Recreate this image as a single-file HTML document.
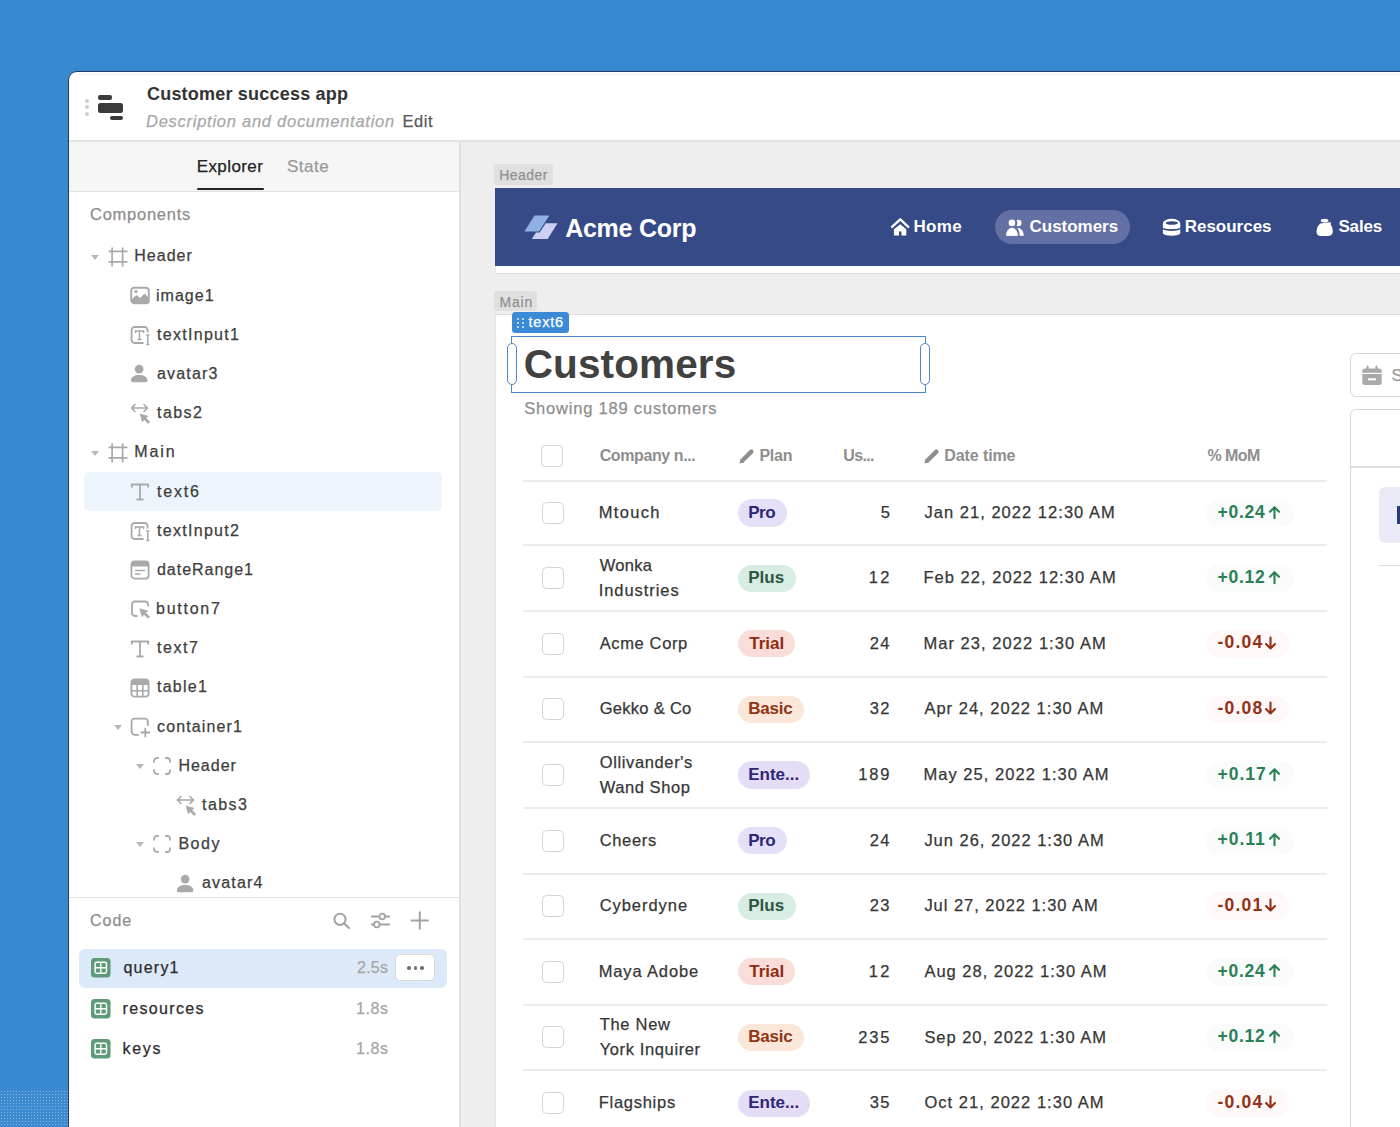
<!DOCTYPE html>
<html><head><meta charset="utf-8">
<style>
*{box-sizing:border-box;margin:0;padding:0}
html,body{width:1400px;height:1127px;overflow:hidden}
body{background:#3989d0;font-family:"Liberation Sans",sans-serif;position:relative}
.t{position:absolute;white-space:nowrap;line-height:1}
svg{overflow:visible}
</style></head><body>
<div style="position:absolute;left:0;top:1090px;width:68px;height:37px;background-color:#3b8bd3;background-image:radial-gradient(circle,#8fb2d2 0.7px,transparent 0.85px);background-size:3px 3px"></div>
<div style="position:absolute;left:68px;top:71px;width:1400px;height:1100px;background:#fff;border:1.5px solid #1d3d68;border-top-left-radius:9px;"></div>
<div style="position:absolute;left:76px;top:73.5px;width:1324px;height:1.2px;background:#f0f0f0"></div>
<div style="position:absolute;left:69px;top:140px;width:1331px;height:1.5px;background:#e3e3e3"></div>
<div style="position:absolute;left:84.8px;top:98.6px;width:4px;height:4px;background:#cfcfcf;border-radius:50%"></div>
<div style="position:absolute;left:84.8px;top:105.2px;width:4px;height:4px;background:#cfcfcf;border-radius:50%"></div>
<div style="position:absolute;left:84.8px;top:111.6px;width:4px;height:4px;background:#cfcfcf;border-radius:50%"></div>
<div style="position:absolute;left:98px;top:95px;width:13.5px;height:5px;background:#3a3b3b;border-radius:2px"></div>
<div style="position:absolute;left:98px;top:103.2px;width:25px;height:9.5px;background:#3a3b3b;border-radius:2.5px"></div>
<div style="position:absolute;left:109.7px;top:115.9px;width:13.2px;height:4px;background:#3a3b3b;border-radius:2px"></div>
<div class="t" style="left:147.00px;top:85.26px;font-size:18px;font-weight:700;font-style:normal;color:#333;letter-spacing:0.206px;">Customer success app</div>
<div class="t" style="left:146.00px;top:112.53px;font-size:16.5px;font-weight:400;font-style:italic;color:#a8a8a8;letter-spacing:0.739px;-webkit-text-stroke:0.25px currentColor">Description and documentation</div>
<div class="t" style="left:402.50px;top:112.53px;font-size:16.5px;font-weight:400;font-style:normal;color:#595959;letter-spacing:0.551px;-webkit-text-stroke:0.25px currentColor">Edit</div>
<div style="position:absolute;left:69px;top:142px;width:390px;height:49px;background:#f5f5f5"></div>
<div style="position:absolute;left:69px;top:190.5px;width:390px;height:1.5px;background:#e2e2e2"></div>
<div style="position:absolute;left:459px;top:142px;width:1.5px;height:1000px;background:#e0e0e0"></div>
<div class="t" style="left:196.70px;top:157.51px;font-size:17px;font-weight:400;font-style:normal;color:#222;letter-spacing:0.408px;-webkit-text-stroke:0.25px currentColor">Explorer</div>
<div class="t" style="left:286.90px;top:157.51px;font-size:17px;font-weight:400;font-style:normal;color:#9a9a9a;letter-spacing:0.540px;-webkit-text-stroke:0.25px currentColor">State</div>
<div style="position:absolute;left:197.4px;top:187.9px;width:66.3px;height:2.6px;background:#222;border-radius:1.5px"></div>
<div class="t" style="left:90.00px;top:206.03px;font-size:16.5px;font-weight:400;font-style:normal;color:#8d8d8d;letter-spacing:0.744px;-webkit-text-stroke:0.25px currentColor">Components</div>
<div style="position:absolute;left:84px;top:472px;width:358px;height:39px;background:#edf4fc;border-radius:5px"></div>
<svg style="position:absolute;left:91px;top:254.60000000000002px;" width="8" height="5" viewBox="0 0 8 5"><path d="M0 0H8L4 5Z" fill="#b8b8b8"/></svg>
<svg style="position:absolute;left:108px;top:246.60000000000002px;" width="20" height="20" viewBox="0 0 20 20"><g stroke="#a9a9a9" stroke-width="1.7" fill="none"><path d="M4.1 0.5V19.5M14.6 0.5V19.5M0.5 4.3H19.5M0.5 14.8H19.5"/></g></svg>
<div class="t" style="left:134.30px;top:248.36px;font-size:16px;font-weight:400;font-style:normal;color:#3d3d3d;letter-spacing:1.010px;-webkit-text-stroke:0.25px currentColor">Header</div>
<svg style="position:absolute;left:130px;top:285.79px;" width="20" height="20" viewBox="0 0 20 20"><rect x="1.2" y="1.7" width="17.6" height="15.6" rx="3" fill="none" stroke="#a9a9a9" stroke-width="1.9"/><path d="M1.5 13.5 L6.5 9 L10 12 L14.5 7.5 L18.5 11.5 V14.5 A3 3 0 0 1 15.5 17.3 H4.5 A3 3 0 0 1 1.5 14.5Z" fill="#a9a9a9"/><circle cx="6" cy="5.6" r="1.7" fill="#a9a9a9"/></svg>
<div class="t" style="left:156.00px;top:287.55px;font-size:16px;font-weight:400;font-style:normal;color:#3d3d3d;letter-spacing:1.024px;-webkit-text-stroke:0.25px currentColor">image1</div>
<svg style="position:absolute;left:130px;top:324.98px;" width="20" height="20" viewBox="0 0 20 20"><g fill="none" stroke="#a9a9a9" stroke-width="1.8"><path d="M17.6 7.5V5A3 3 0 0 0 14.6 2H4.6A3 3 0 0 0 1.6 5V15A3 3 0 0 0 4.6 18H13.5"/><path d="M5.5 8V6H13.5V8M9.5 6V14.5M7.5 14.5H11.5" stroke-width="1.5"/><path d="M17.8 10V19.5M16.2 10H19.4M16.2 19.5H19.4" stroke-width="1.5"/></g></svg>
<div class="t" style="left:157.00px;top:326.74px;font-size:16px;font-weight:400;font-style:normal;color:#3d3d3d;letter-spacing:1.292px;-webkit-text-stroke:0.25px currentColor">textInput1</div>
<svg style="position:absolute;left:130px;top:364.17px;" width="20" height="20" viewBox="0 0 20 20"><circle cx="9.15" cy="5.1" r="4.4" fill="#a9a9a9"/><path d="M0.9 16.4C0.9 13 4.5 11 9.15 11C13.8 11 17.4 13 17.4 16.4V16.6A1.6 1.6 0 0 1 15.8 18.2H2.5A1.6 1.6 0 0 1 0.9 16.6Z" fill="#a9a9a9"/></svg>
<div class="t" style="left:157.00px;top:365.93px;font-size:16px;font-weight:400;font-style:normal;color:#3d3d3d;letter-spacing:1.172px;-webkit-text-stroke:0.25px currentColor">avatar3</div>
<svg style="position:absolute;left:130px;top:403.36px;" width="20" height="20" viewBox="0 0 20 20"><g fill="none" stroke="#a9a9a9" stroke-width="1.6" stroke-linecap="round" stroke-linejoin="round"><path d="M1.5 5H17.5M5 1.5L1.5 5L5 8.5M14 1.5L17.5 5L14 8.5"/></g><path d="M10.3 11.2L18 13.2L15.6 14.9L19.6 18.9L18.1 20.4L14.1 16.4L12.4 18.8Z" fill="#a9a9a9" stroke="#a9a9a9" stroke-width="0.8" stroke-linejoin="round"/></svg>
<div class="t" style="left:157.00px;top:405.12px;font-size:16px;font-weight:400;font-style:normal;color:#3d3d3d;letter-spacing:1.439px;-webkit-text-stroke:0.25px currentColor">tabs2</div>
<svg style="position:absolute;left:91px;top:450.55px;" width="8" height="5" viewBox="0 0 8 5"><path d="M0 0H8L4 5Z" fill="#b8b8b8"/></svg>
<svg style="position:absolute;left:108px;top:442.55px;" width="20" height="20" viewBox="0 0 20 20"><g stroke="#a9a9a9" stroke-width="1.7" fill="none"><path d="M4.1 0.5V19.5M14.6 0.5V19.5M0.5 4.3H19.5M0.5 14.8H19.5"/></g></svg>
<div class="t" style="left:134.30px;top:444.31px;font-size:16px;font-weight:400;font-style:normal;color:#3d3d3d;letter-spacing:1.906px;-webkit-text-stroke:0.25px currentColor">Main</div>
<svg style="position:absolute;left:130px;top:481.74px;" width="20" height="20" viewBox="0 0 20 20"><g fill="none" stroke="#a9a9a9" stroke-width="1.8"><path d="M1.8 5.5V2.5H18.2V5.5M10 2.5V17.5M6.5 17.5H13.5"/></g></svg>
<div class="t" style="left:157.00px;top:483.50px;font-size:16px;font-weight:400;font-style:normal;color:#3d3d3d;letter-spacing:1.803px;-webkit-text-stroke:0.25px currentColor">text6</div>
<svg style="position:absolute;left:130px;top:520.93px;" width="20" height="20" viewBox="0 0 20 20"><g fill="none" stroke="#a9a9a9" stroke-width="1.8"><path d="M17.6 7.5V5A3 3 0 0 0 14.6 2H4.6A3 3 0 0 0 1.6 5V15A3 3 0 0 0 4.6 18H13.5"/><path d="M5.5 8V6H13.5V8M9.5 6V14.5M7.5 14.5H11.5" stroke-width="1.5"/><path d="M17.8 10V19.5M16.2 10H19.4M16.2 19.5H19.4" stroke-width="1.5"/></g></svg>
<div class="t" style="left:157.00px;top:522.69px;font-size:16px;font-weight:400;font-style:normal;color:#3d3d3d;letter-spacing:1.292px;-webkit-text-stroke:0.25px currentColor">textInput2</div>
<svg style="position:absolute;left:130px;top:560.12px;" width="20" height="20" viewBox="0 0 20 20"><rect x="1.4" y="1.4" width="17.2" height="17.2" rx="3" fill="none" stroke="#a9a9a9" stroke-width="1.8"/><path d="M1.4 4.4A3 3 0 0 1 4.4 1.4H15.6A3 3 0 0 1 18.6 4.4V6.5H1.4Z" fill="#a9a9a9"/><path d="M5 10.5H15M5 14H10.5" stroke="#a9a9a9" stroke-width="1.6"/></svg>
<div class="t" style="left:157.00px;top:561.88px;font-size:16px;font-weight:400;font-style:normal;color:#3d3d3d;letter-spacing:0.968px;-webkit-text-stroke:0.25px currentColor">dateRange1</div>
<svg style="position:absolute;left:130px;top:599.31px;" width="20" height="20" viewBox="0 0 20 20"><g fill="none" stroke="#a9a9a9" stroke-width="1.8"><path d="M7.5 17H5A3 3 0 0 1 2 14V5.5A3 3 0 0 1 5 2.5H15A3 3 0 0 1 18 5.5V7.5"/></g><path d="M9.8 9.8L17.8 12L15.4 13.7L19.5 17.8L18 19.3L13.9 15.2L12.2 17.6Z" fill="#a9a9a9" stroke="#a9a9a9" stroke-width="0.8" stroke-linejoin="round"/></svg>
<div class="t" style="left:156.00px;top:601.07px;font-size:16px;font-weight:400;font-style:normal;color:#3d3d3d;letter-spacing:1.753px;-webkit-text-stroke:0.25px currentColor">button7</div>
<svg style="position:absolute;left:130px;top:638.5px;" width="20" height="20" viewBox="0 0 20 20"><g fill="none" stroke="#a9a9a9" stroke-width="1.8"><path d="M1.8 5.5V2.5H18.2V5.5M10 2.5V17.5M6.5 17.5H13.5"/></g></svg>
<div class="t" style="left:157.00px;top:640.26px;font-size:16px;font-weight:400;font-style:normal;color:#3d3d3d;letter-spacing:1.553px;-webkit-text-stroke:0.25px currentColor">text7</div>
<svg style="position:absolute;left:130px;top:677.69px;" width="20" height="20" viewBox="0 0 20 20"><rect x="1.4" y="1.4" width="17.2" height="17.2" rx="3.2" fill="none" stroke="#a9a9a9" stroke-width="1.8"/><path d="M1.4 4.6A3.2 3.2 0 0 1 4.6 1.4H15.4A3.2 3.2 0 0 1 18.6 4.6V7H1.4Z" fill="#a9a9a9"/><path d="M7.2 6.5V18.5M12.8 6.5V18.5M1.5 12.7H18.5" stroke="#a9a9a9" stroke-width="1.6"/></svg>
<div class="t" style="left:157.00px;top:679.45px;font-size:16px;font-weight:400;font-style:normal;color:#3d3d3d;letter-spacing:1.261px;-webkit-text-stroke:0.25px currentColor">table1</div>
<svg style="position:absolute;left:113.5px;top:724.88px;" width="8" height="5" viewBox="0 0 8 5"><path d="M0 0H8L4 5Z" fill="#b8b8b8"/></svg>
<svg style="position:absolute;left:130px;top:716.88px;" width="20" height="20" viewBox="0 0 20 20"><g fill="none" stroke="#a9a9a9" stroke-width="1.8"><path d="M9 17.8H4.6A3 3 0 0 1 1.6 14.8V4.6A3 3 0 0 1 4.6 1.6H14.8A3 3 0 0 1 17.8 4.6V9"/><path d="M15.3 10.8V20.3M10.6 15.5H20.1" stroke-width="1.8"/></g></svg>
<div class="t" style="left:157.00px;top:718.64px;font-size:16px;font-weight:400;font-style:normal;color:#3d3d3d;letter-spacing:1.131px;-webkit-text-stroke:0.25px currentColor">container1</div>
<svg style="position:absolute;left:136px;top:764.07px;" width="8" height="5" viewBox="0 0 8 5"><path d="M0 0H8L4 5Z" fill="#b8b8b8"/></svg>
<svg style="position:absolute;left:151.8px;top:756.07px;" width="20" height="20" viewBox="0 0 20 20"><g fill="none" stroke="#a9a9a9" stroke-width="1.8"><path d="M2 6.5V5A3 3 0 0 1 5 2H6.8M13.2 2H15A3 3 0 0 1 18 5V6.5M18 13.5V15A3 3 0 0 1 15 18H13.2M6.8 18H5A3 3 0 0 1 2 15V13.5"/></g></svg>
<div class="t" style="left:178.40px;top:757.83px;font-size:16px;font-weight:400;font-style:normal;color:#3d3d3d;letter-spacing:1.010px;-webkit-text-stroke:0.25px currentColor">Header</div>
<svg style="position:absolute;left:175.5px;top:795.26px;" width="20" height="20" viewBox="0 0 20 20"><g fill="none" stroke="#a9a9a9" stroke-width="1.6" stroke-linecap="round" stroke-linejoin="round"><path d="M1.5 5H17.5M5 1.5L1.5 5L5 8.5M14 1.5L17.5 5L14 8.5"/></g><path d="M10.3 11.2L18 13.2L15.6 14.9L19.6 18.9L18.1 20.4L14.1 16.4L12.4 18.8Z" fill="#a9a9a9" stroke="#a9a9a9" stroke-width="0.8" stroke-linejoin="round"/></svg>
<div class="t" style="left:202.00px;top:797.02px;font-size:16px;font-weight:400;font-style:normal;color:#3d3d3d;letter-spacing:1.439px;-webkit-text-stroke:0.25px currentColor">tabs3</div>
<svg style="position:absolute;left:136px;top:842.45px;" width="8" height="5" viewBox="0 0 8 5"><path d="M0 0H8L4 5Z" fill="#b8b8b8"/></svg>
<svg style="position:absolute;left:151.8px;top:834.45px;" width="20" height="20" viewBox="0 0 20 20"><g fill="none" stroke="#a9a9a9" stroke-width="1.8"><path d="M2 6.5V5A3 3 0 0 1 5 2H6.8M13.2 2H15A3 3 0 0 1 18 5V6.5M18 13.5V15A3 3 0 0 1 15 18H13.2M6.8 18H5A3 3 0 0 1 2 15V13.5"/></g></svg>
<div class="t" style="left:178.40px;top:836.21px;font-size:16px;font-weight:400;font-style:normal;color:#3d3d3d;letter-spacing:1.510px;-webkit-text-stroke:0.25px currentColor">Body</div>
<svg style="position:absolute;left:175.5px;top:873.64px;" width="20" height="20" viewBox="0 0 20 20"><circle cx="9.15" cy="5.1" r="4.4" fill="#a9a9a9"/><path d="M0.9 16.4C0.9 13 4.5 11 9.15 11C13.8 11 17.4 13 17.4 16.4V16.6A1.6 1.6 0 0 1 15.8 18.2H2.5A1.6 1.6 0 0 1 0.9 16.6Z" fill="#a9a9a9"/></svg>
<div class="t" style="left:202.00px;top:875.40px;font-size:16px;font-weight:400;font-style:normal;color:#3d3d3d;letter-spacing:1.172px;-webkit-text-stroke:0.25px currentColor">avatar4</div>
<div style="position:absolute;left:69px;top:896.5px;width:390px;height:1.3px;background:#e2e2e2"></div>
<div class="t" style="left:90.00px;top:912.66px;font-size:16px;font-weight:400;font-style:normal;color:#8d8d8d;letter-spacing:0.983px;-webkit-text-stroke:0.25px currentColor">Code</div>
<svg style="position:absolute;left:332px;top:912px;" width="20" height="18" viewBox="0 0 20 18"><circle cx="8" cy="7.3" r="5.6" fill="none" stroke="#a3a3a3" stroke-width="2"/><path d="M12.2 11.5L17 16" stroke="#a3a3a3" stroke-width="2.2" stroke-linecap="round"/></svg>
<svg style="position:absolute;left:370px;top:911px;" width="21" height="19" viewBox="0 0 21 19"><g fill="none" stroke="#a3a3a3" stroke-width="1.8"><path d="M1 5.5H9.5M15 5.5H20M1 13.5H4M9.5 13.5H20"/><circle cx="12.2" cy="5.5" r="2.8"/><circle cx="6.8" cy="13.5" r="2.8"/></g></svg>
<svg style="position:absolute;left:410px;top:911px;" width="20" height="19" viewBox="0 0 20 19"><path d="M9.8 1.3V17.7M1.5 9.4H17.9" stroke="#a3a3a3" stroke-width="2" stroke-linecap="round"/></svg>
<div style="position:absolute;left:78.9px;top:948.5px;width:368.5px;height:39px;background:#dce9f9;border-radius:6px"></div>
<svg style="position:absolute;left:90.9px;top:958.2px;" width="19.5" height="19.5" viewBox="0 0 19.5 19.5"><rect x="0" y="0" width="19.5" height="19.5" rx="3.5" fill="#5d9b77"/><rect x="4.1" y="4.3" width="11.4" height="10.9" rx="1.6" fill="none" stroke="#fff" stroke-width="1.5"/><path d="M9.8 4.3V15.2M4.1 9.75H15.5" stroke="#fff" stroke-width="1.4"/></svg>
<div class="t" style="left:123.50px;top:959.96px;font-size:16px;font-weight:400;font-style:normal;color:#2c2c2c;letter-spacing:1.215px;-webkit-text-stroke:0.25px currentColor">query1</div>
<div class="t" style="left:357.00px;top:959.96px;font-size:16px;font-weight:400;font-style:normal;color:#a5a5a5;letter-spacing:0.253px;-webkit-text-stroke:0.25px currentColor">2.5s</div>
<svg style="position:absolute;left:90.9px;top:998.8000000000001px;" width="19.5" height="19.5" viewBox="0 0 19.5 19.5"><rect x="0" y="0" width="19.5" height="19.5" rx="3.5" fill="#5d9b77"/><rect x="4.1" y="4.3" width="11.4" height="10.9" rx="1.6" fill="none" stroke="#fff" stroke-width="1.5"/><path d="M9.8 4.3V15.2M4.1 9.75H15.5" stroke="#fff" stroke-width="1.4"/></svg>
<div class="t" style="left:122.50px;top:1000.56px;font-size:16px;font-weight:400;font-style:normal;color:#2c2c2c;letter-spacing:1.344px;-webkit-text-stroke:0.25px currentColor">resources</div>
<div class="t" style="left:356.00px;top:1000.56px;font-size:16px;font-weight:400;font-style:normal;color:#a5a5a5;letter-spacing:0.586px;-webkit-text-stroke:0.25px currentColor">1.8s</div>
<svg style="position:absolute;left:90.9px;top:1039.2px;" width="19.5" height="19.5" viewBox="0 0 19.5 19.5"><rect x="0" y="0" width="19.5" height="19.5" rx="3.5" fill="#5d9b77"/><rect x="4.1" y="4.3" width="11.4" height="10.9" rx="1.6" fill="none" stroke="#fff" stroke-width="1.5"/><path d="M9.8 4.3V15.2M4.1 9.75H15.5" stroke="#fff" stroke-width="1.4"/></svg>
<div class="t" style="left:122.50px;top:1040.96px;font-size:16px;font-weight:400;font-style:normal;color:#2c2c2c;letter-spacing:1.701px;-webkit-text-stroke:0.25px currentColor">keys</div>
<div class="t" style="left:356.00px;top:1040.96px;font-size:16px;font-weight:400;font-style:normal;color:#a5a5a5;letter-spacing:0.586px;-webkit-text-stroke:0.25px currentColor">1.8s</div>
<div style="position:absolute;left:395.3px;top:954.3px;width:40.2px;height:27.1px;background:#fff;border:1.2px solid #dadada;border-radius:5px"></div>
<div style="position:absolute;left:407.0px;top:966.1px;width:3.6px;height:3.6px;background:#707070;border-radius:50%"></div>
<div style="position:absolute;left:413.59999999999997px;top:966.1px;width:3.6px;height:3.6px;background:#707070;border-radius:50%"></div>
<div style="position:absolute;left:420.3px;top:966.1px;width:3.6px;height:3.6px;background:#707070;border-radius:50%"></div>
<div style="position:absolute;left:460.5px;top:141.5px;width:940px;height:990px;background:#eeeeee"></div>
<div style="position:absolute;left:494.2px;top:164px;width:59px;height:20.5px;background:#e0e0e0;border-radius:3px"></div>
<div class="t" style="left:499.30px;top:167.65px;font-size:14px;font-weight:400;font-style:normal;color:#919191;letter-spacing:0.429px;-webkit-text-stroke:0.25px currentColor">Header</div>
<div style="position:absolute;left:495px;top:188px;width:905px;height:86px;background:#fff;border-bottom:1.5px solid #dedede;border-left:1px solid #e6e6e6"></div>
<div style="position:absolute;left:495px;top:187.8px;width:905px;height:78px;background:#364a87"></div>
<svg style="position:absolute;left:522px;top:213px;" width="38" height="28" viewBox="0 0 38 28"><path d="M12.5 2.6H27.4L16.9 18.6H2.4Z" fill="#8fb0e2"/><path d="M9.8 26L14 19.6H17.6L23.7 10.2H35.5L25.7 26Z" fill="#cdd0f2"/></svg>
<div class="t" style="left:565.20px;top:215.54px;font-size:25px;font-weight:700;font-style:normal;color:#ffffff;letter-spacing:-0.261px;">Acme Corp</div>
<div style="position:absolute;left:995.1px;top:210.2px;width:134.7px;height:33.4px;background:#6470a4;border-radius:17px"></div>
<div class="t" style="left:913.40px;top:218.11px;font-size:17px;font-weight:700;font-style:normal;color:#fff;letter-spacing:0.341px;">Home</div>
<div class="t" style="left:1029.50px;top:218.11px;font-size:17px;font-weight:700;font-style:normal;color:#fff;letter-spacing:-0.018px;">Customers</div>
<div class="t" style="left:1184.70px;top:218.11px;font-size:17px;font-weight:700;font-style:normal;color:#fff;letter-spacing:-0.010px;">Resources</div>
<div class="t" style="left:1338.40px;top:218.11px;font-size:17px;font-weight:700;font-style:normal;color:#fff;letter-spacing:-0.143px;">Sales</div>
<svg style="position:absolute;left:891px;top:218px;" width="19" height="19" viewBox="0 0 19 19"><path d="M1 8.9L9.3 1.3L17.3 8.9" fill="none" stroke="#ffffff" stroke-width="2.3" stroke-linecap="round" stroke-linejoin="round"/><path d="M2.9 11.2L9.3 6.2L15.3 11.2V17.6H10.5V13.4H8V17.6H2.9Z" fill="#ffffff"/></svg>
<svg style="position:absolute;left:1006px;top:219px;" width="18" height="18" viewBox="0 0 18 18"><circle cx="12.3" cy="3.9" r="3.2" fill="#ffffff"/><circle cx="6.3" cy="3.9" r="5.1" fill="#6470a4"/><circle cx="5.9" cy="3.9" r="3.3" fill="#ffffff"/><path d="M12.6 8.9C15.6 9.6 17.8 12.5 17.8 16.8H13.6C13.6 13.3 12.9 10.8 11.2 9.3Z" fill="#ffffff"/><path d="M0 16.8A5.95 8 0 0 1 11.9 16.8Z" fill="#ffffff" stroke="#6470a4" stroke-width="1.2" paint-order="stroke"/><path d="M0.6 16.8A5.35 7.4 0 0 1 11.3 16.8Z" fill="#ffffff"/></svg>
<svg style="position:absolute;left:1162px;top:218px;" width="20" height="19" viewBox="0 0 20 19"><path d="M0.9 5.6A8.7 4.9 0 0 1 18.3 5.6V9.6A8.7 1.6 0 0 1 0.9 9.6Z" fill="#ffffff"/><ellipse cx="9.8" cy="5" rx="6.15" ry="1.75" fill="#364a87"/><path d="M0.9 11A8.7 1.9 0 0 0 18.3 11V15A8.7 2.7 0 0 1 0.9 15Z" fill="#ffffff"/></svg>
<svg style="position:absolute;left:1315.5px;top:217.5px;" width="18" height="19" viewBox="0 0 18 19"><ellipse cx="8.6" cy="2.6" rx="3.9" ry="1.9" fill="#ffffff"/><path d="M4.3 5.6C6 4.9 10.5 4.9 15.1 4.3L14.6 6.6C16.1 8.6 16.8 11 16.8 13.6C16.8 16.6 14.6 18.1 11.6 18.1H5.2C2.1 18.1 0.5 16.6 0.5 13.6C0.5 10.2 2.3 7.1 4.3 5.6Z" fill="#ffffff"/></svg>
<div style="position:absolute;left:494.2px;top:291.4px;width:43px;height:20px;background:#e0e0e0;border-radius:3px"></div>
<div class="t" style="left:499.50px;top:294.95px;font-size:14px;font-weight:400;font-style:normal;color:#919191;letter-spacing:0.814px;-webkit-text-stroke:0.25px currentColor">Main</div>
<div style="position:absolute;left:495px;top:314px;width:905px;height:830px;background:#fff;border-top:1.5px solid #dcdcdc;border-left:1px solid #e6e6e6"></div>
<div style="position:absolute;left:511.8px;top:311.6px;width:57.3px;height:21.8px;background:#3b8ad8;border-radius:3.5px"></div>
<div style="position:absolute;left:517.2px;top:317.6px;width:2.3px;height:2.3px;background:#e8f1fb;border-radius:50%"></div>
<div style="position:absolute;left:522.2px;top:317.6px;width:2.3px;height:2.3px;background:#e8f1fb;border-radius:50%"></div>
<div style="position:absolute;left:517.2px;top:321.6px;width:2.3px;height:2.3px;background:#e8f1fb;border-radius:50%"></div>
<div style="position:absolute;left:522.2px;top:321.6px;width:2.3px;height:2.3px;background:#e8f1fb;border-radius:50%"></div>
<div style="position:absolute;left:517.2px;top:325.6px;width:2.3px;height:2.3px;background:#e8f1fb;border-radius:50%"></div>
<div style="position:absolute;left:522.2px;top:325.6px;width:2.3px;height:2.3px;background:#e8f1fb;border-radius:50%"></div>
<div class="t" style="left:528.50px;top:315.03px;font-size:14.5px;font-weight:400;font-style:normal;color:#fff;letter-spacing:0.782px;-webkit-text-stroke:0.25px currentColor">text6</div>
<div style="position:absolute;left:511.2px;top:335.5px;width:415.2px;height:57.3px;border:1.8px solid #4b88cb"></div>
<div style="position:absolute;left:507px;top:343.2px;width:9.8px;height:41.6px;background:#fff;border:1.8px solid #4b88cb;border-radius:5px"></div>
<div style="position:absolute;left:920.2px;top:343.2px;width:9.8px;height:41.6px;background:#fff;border:1.8px solid #4b88cb;border-radius:5px"></div>
<div class="t" style="left:523.70px;top:343.92px;font-size:40.5px;font-weight:700;font-style:normal;color:#414141;letter-spacing:0.121px;">Customers</div>
<div class="t" style="left:524.20px;top:400.33px;font-size:16.5px;font-weight:400;font-style:normal;color:#8e8e8e;letter-spacing:0.808px;-webkit-text-stroke:0.25px currentColor">Showing 189 customers</div>
<div style="position:absolute;left:541.2px;top:445px;width:22px;height:21.6px;border:1.3px solid #d4d4d4;border-radius:4px;background:#fff"></div>
<div class="t" style="left:599.70px;top:448.16px;font-size:16px;font-weight:700;font-style:normal;color:#8e8e8e;letter-spacing:-0.401px;">Company n...</div>
<svg style="position:absolute;left:739px;top:448.8px;" width="15.5" height="15" viewBox="0 0 15.5 15"><path d="M4.2 10.8L12.4 2.6" stroke="#8e8e8e" stroke-width="4.4" stroke-linecap="round"/><path d="M0.5 14.5L1.6 9.6L5.4 13.4Z" fill="#8e8e8e"/></svg>
<div class="t" style="left:759.40px;top:448.16px;font-size:16px;font-weight:700;font-style:normal;color:#8e8e8e;letter-spacing:-0.239px;">Plan</div>
<div class="t" style="left:843.30px;top:448.16px;font-size:16px;font-weight:700;font-style:normal;color:#8e8e8e;letter-spacing:-0.686px;">Us...</div>
<svg style="position:absolute;left:923.6px;top:448.8px;" width="15.5" height="15" viewBox="0 0 15.5 15"><path d="M4.2 10.8L12.4 2.6" stroke="#8e8e8e" stroke-width="4.4" stroke-linecap="round"/><path d="M0.5 14.5L1.6 9.6L5.4 13.4Z" fill="#8e8e8e"/></svg>
<div class="t" style="left:944.30px;top:448.16px;font-size:16px;font-weight:700;font-style:normal;color:#8e8e8e;letter-spacing:-0.103px;">Date time</div>
<div class="t" style="left:1207.50px;top:448.16px;font-size:16px;font-weight:700;font-style:normal;color:#8e8e8e;letter-spacing:-0.543px;">% MoM</div>
<div style="position:absolute;left:523px;top:480px;width:804px;height:2px;background:#ececec"></div>
<div style="position:absolute;left:523px;top:544px;width:804px;height:2px;background:#ececec"></div>
<div style="position:absolute;left:523px;top:610px;width:804px;height:2px;background:#ececec"></div>
<div style="position:absolute;left:523px;top:676px;width:804px;height:2px;background:#ececec"></div>
<div style="position:absolute;left:523px;top:741px;width:804px;height:2px;background:#ececec"></div>
<div style="position:absolute;left:523px;top:807px;width:804px;height:2px;background:#ececec"></div>
<div style="position:absolute;left:523px;top:873px;width:804px;height:2px;background:#ececec"></div>
<div style="position:absolute;left:523px;top:938px;width:804px;height:2px;background:#ececec"></div>
<div style="position:absolute;left:523px;top:1004px;width:804px;height:2px;background:#ececec"></div>
<div style="position:absolute;left:523px;top:1069px;width:804px;height:2px;background:#ececec"></div>
<div style="position:absolute;left:523px;top:1135px;width:804px;height:2px;background:#ececec"></div>
<div style="position:absolute;left:541.5px;top:501.90000000000003px;width:22px;height:22px;border:1.3px solid #d4d4d4;border-radius:4.5px;background:#fff"></div>
<div class="t" style="left:598.70px;top:504.03px;font-size:16.5px;font-weight:400;font-style:normal;color:#363636;letter-spacing:1.334px;-webkit-text-stroke:0.25px currentColor">Mtouch</div>
<div style="position:absolute;left:737.7px;top:499.40000000000003px;width:49.6px;height:27.2px;background:#e5dff7;border-radius:14px"></div>
<div class="t" style="left:748.20px;top:503.91px;font-size:17px;font-weight:700;font-style:normal;color:#2c2676;letter-spacing:-0.427px;">Pro</div>
<div class="t" style="left:880.70px;top:504.03px;font-size:16.5px;font-weight:400;font-style:normal;color:#363636;letter-spacing:0.000px;-webkit-text-stroke:0.25px currentColor">5</div>
<div class="t" style="left:924.40px;top:504.03px;font-size:16.5px;font-weight:400;font-style:normal;color:#363636;letter-spacing:1.036px;-webkit-text-stroke:0.25px currentColor">Jan 21, 2022 12:30 AM</div>
<div style="position:absolute;left:1206px;top:499.20000000000005px;width:87.8px;height:27.8px;background:#f9fcfb;border-radius:14px"></div>
<div class="t" style="left:1217.60px;top:503.69px;font-size:17.5px;font-weight:700;font-style:normal;color:#2c8056;letter-spacing:0.688px;">+0.24</div>
<svg style="position:absolute;left:1268.8px;top:505.6px;" width="11" height="12.7" viewBox="0 0 11 12.7"><path d="M5.5 12.2V1.2M1 5.7L5.5 1.2L10 5.7" fill="none" stroke="#2c8056" stroke-width="2.1" stroke-linecap="round" stroke-linejoin="round"/></svg>
<div style="position:absolute;left:541.5px;top:567.0149999999999px;width:22px;height:22px;border:1.3px solid #d4d4d4;border-radius:4.5px;background:#fff"></div>
<div class="t" style="left:599.70px;top:556.95px;font-size:16.5px;font-weight:400;font-style:normal;color:#363636;letter-spacing:0.280px;-webkit-text-stroke:0.25px currentColor">Wonka</div>
<div class="t" style="left:598.70px;top:582.05px;font-size:16.5px;font-weight:400;font-style:normal;color:#363636;letter-spacing:0.946px;-webkit-text-stroke:0.25px currentColor">Industries</div>
<div style="position:absolute;left:737.7px;top:564.5149999999999px;width:58.0px;height:27.2px;background:#d8ede2;border-radius:14px"></div>
<div class="t" style="left:748.20px;top:569.02px;font-size:17px;font-weight:700;font-style:normal;color:#2c5843;letter-spacing:0.018px;">Plus</div>
<div class="t" style="left:868.70px;top:569.15px;font-size:16.5px;font-weight:400;font-style:normal;color:#363636;letter-spacing:2.323px;-webkit-text-stroke:0.25px currentColor">12</div>
<div class="t" style="left:923.40px;top:569.15px;font-size:16.5px;font-weight:400;font-style:normal;color:#363636;letter-spacing:1.035px;-webkit-text-stroke:0.25px currentColor">Feb 22, 2022 12:30 AM</div>
<div style="position:absolute;left:1206px;top:564.3149999999999px;width:87.8px;height:27.8px;background:#f9fcfb;border-radius:14px"></div>
<div class="t" style="left:1217.60px;top:568.80px;font-size:17.5px;font-weight:700;font-style:normal;color:#2c8056;letter-spacing:0.688px;">+0.12</div>
<svg style="position:absolute;left:1268.8px;top:570.7149999999999px;" width="11" height="12.7" viewBox="0 0 11 12.7"><path d="M5.5 12.2V1.2M1 5.7L5.5 1.2L10 5.7" fill="none" stroke="#2c8056" stroke-width="2.1" stroke-linecap="round" stroke-linejoin="round"/></svg>
<div style="position:absolute;left:541.5px;top:632.645px;width:22px;height:22px;border:1.3px solid #d4d4d4;border-radius:4.5px;background:#fff"></div>
<div class="t" style="left:599.70px;top:634.78px;font-size:16.5px;font-weight:400;font-style:normal;color:#363636;letter-spacing:0.632px;-webkit-text-stroke:0.25px currentColor">Acme Corp</div>
<div style="position:absolute;left:737.7px;top:630.145px;width:57.8px;height:27.2px;background:#f9ddd8;border-radius:14px"></div>
<div class="t" style="left:749.20px;top:634.65px;font-size:17px;font-weight:700;font-style:normal;color:#8d2d17;letter-spacing:0.015px;">Trial</div>
<div class="t" style="left:869.70px;top:634.78px;font-size:16.5px;font-weight:400;font-style:normal;color:#363636;letter-spacing:1.323px;-webkit-text-stroke:0.25px currentColor">24</div>
<div class="t" style="left:923.40px;top:634.78px;font-size:16.5px;font-weight:400;font-style:normal;color:#363636;letter-spacing:1.052px;-webkit-text-stroke:0.25px currentColor">Mar 23, 2022 1:30 AM</div>
<div style="position:absolute;left:1206px;top:629.945px;width:83.4px;height:27.8px;background:#fef9f8;border-radius:14px"></div>
<div class="t" style="left:1217.60px;top:634.43px;font-size:17.5px;font-weight:700;font-style:normal;color:#923116;letter-spacing:1.186px;">-0.04</div>
<svg style="position:absolute;left:1265.4px;top:636.645px;" width="11" height="12.7" viewBox="0 0 11 12.7"><path d="M5.5 0.5V11.5M1 7L5.5 11.5L10 7" fill="none" stroke="#923116" stroke-width="2.1" stroke-linecap="round" stroke-linejoin="round"/></svg>
<div style="position:absolute;left:541.5px;top:698.2749999999999px;width:22px;height:22px;border:1.3px solid #d4d4d4;border-radius:4.5px;background:#fff"></div>
<div class="t" style="left:599.70px;top:700.41px;font-size:16.5px;font-weight:400;font-style:normal;color:#363636;letter-spacing:0.291px;-webkit-text-stroke:0.25px currentColor">Gekko &amp; Co</div>
<div style="position:absolute;left:737.7px;top:695.7749999999999px;width:66.6px;height:27.2px;background:#fbe6da;border-radius:14px"></div>
<div class="t" style="left:748.20px;top:700.28px;font-size:17px;font-weight:700;font-style:normal;color:#8f3514;letter-spacing:-0.202px;">Basic</div>
<div class="t" style="left:869.70px;top:700.41px;font-size:16.5px;font-weight:400;font-style:normal;color:#363636;letter-spacing:1.323px;-webkit-text-stroke:0.25px currentColor">32</div>
<div class="t" style="left:924.40px;top:700.41px;font-size:16.5px;font-weight:400;font-style:normal;color:#363636;letter-spacing:1.012px;-webkit-text-stroke:0.25px currentColor">Apr 24, 2022 1:30 AM</div>
<div style="position:absolute;left:1206px;top:695.5749999999999px;width:83.4px;height:27.8px;background:#fef9f8;border-radius:14px"></div>
<div class="t" style="left:1217.60px;top:700.06px;font-size:17.5px;font-weight:700;font-style:normal;color:#923116;letter-spacing:1.186px;">-0.08</div>
<svg style="position:absolute;left:1265.4px;top:702.2749999999999px;" width="11" height="12.7" viewBox="0 0 11 12.7"><path d="M5.5 0.5V11.5M1 7L5.5 11.5L10 7" fill="none" stroke="#923116" stroke-width="2.1" stroke-linecap="round" stroke-linejoin="round"/></svg>
<div style="position:absolute;left:541.5px;top:763.905px;width:22px;height:22px;border:1.3px solid #d4d4d4;border-radius:4.5px;background:#fff"></div>
<div class="t" style="left:599.70px;top:753.84px;font-size:16.5px;font-weight:400;font-style:normal;color:#363636;letter-spacing:0.633px;-webkit-text-stroke:0.25px currentColor">Ollivander's</div>
<div class="t" style="left:599.70px;top:778.94px;font-size:16.5px;font-weight:400;font-style:normal;color:#363636;letter-spacing:0.571px;-webkit-text-stroke:0.25px currentColor">Wand Shop</div>
<div style="position:absolute;left:737.7px;top:761.405px;width:72.7px;height:27.2px;background:#e4ddf5;border-radius:14px"></div>
<div class="t" style="left:748.20px;top:765.91px;font-size:17px;font-weight:700;font-style:normal;color:#2c2676;letter-spacing:-0.014px;">Ente...</div>
<div class="t" style="left:858.30px;top:766.04px;font-size:16.5px;font-weight:400;font-style:normal;color:#363636;letter-spacing:1.773px;-webkit-text-stroke:0.25px currentColor">189</div>
<div class="t" style="left:923.40px;top:766.04px;font-size:16.5px;font-weight:400;font-style:normal;color:#363636;letter-spacing:1.054px;-webkit-text-stroke:0.25px currentColor">May 25, 2022 1:30 AM</div>
<div style="position:absolute;left:1206px;top:761.205px;width:87.8px;height:27.8px;background:#f9fcfb;border-radius:14px"></div>
<div class="t" style="left:1217.60px;top:765.69px;font-size:17.5px;font-weight:700;font-style:normal;color:#2c8056;letter-spacing:0.938px;">+0.17</div>
<svg style="position:absolute;left:1268.8px;top:767.605px;" width="11" height="12.7" viewBox="0 0 11 12.7"><path d="M5.5 12.2V1.2M1 5.7L5.5 1.2L10 5.7" fill="none" stroke="#2c8056" stroke-width="2.1" stroke-linecap="round" stroke-linejoin="round"/></svg>
<div style="position:absolute;left:541.5px;top:829.5349999999999px;width:22px;height:22px;border:1.3px solid #d4d4d4;border-radius:4.5px;background:#fff"></div>
<div class="t" style="left:599.70px;top:831.67px;font-size:16.5px;font-weight:400;font-style:normal;color:#363636;letter-spacing:0.672px;-webkit-text-stroke:0.25px currentColor">Cheers</div>
<div style="position:absolute;left:737.7px;top:827.0349999999999px;width:49.6px;height:27.2px;background:#e5dff7;border-radius:14px"></div>
<div class="t" style="left:748.20px;top:831.54px;font-size:17px;font-weight:700;font-style:normal;color:#2c2676;letter-spacing:-0.427px;">Pro</div>
<div class="t" style="left:869.70px;top:831.67px;font-size:16.5px;font-weight:400;font-style:normal;color:#363636;letter-spacing:1.323px;-webkit-text-stroke:0.25px currentColor">24</div>
<div class="t" style="left:924.40px;top:831.67px;font-size:16.5px;font-weight:400;font-style:normal;color:#363636;letter-spacing:0.984px;-webkit-text-stroke:0.25px currentColor">Jun 26, 2022 1:30 AM</div>
<div style="position:absolute;left:1206px;top:826.8349999999999px;width:87.8px;height:27.8px;background:#f9fcfb;border-radius:14px"></div>
<div class="t" style="left:1217.60px;top:831.32px;font-size:17.5px;font-weight:700;font-style:normal;color:#2c8056;letter-spacing:0.930px;">+0.11</div>
<svg style="position:absolute;left:1268.8px;top:833.2349999999999px;" width="11" height="12.7" viewBox="0 0 11 12.7"><path d="M5.5 12.2V1.2M1 5.7L5.5 1.2L10 5.7" fill="none" stroke="#2c8056" stroke-width="2.1" stroke-linecap="round" stroke-linejoin="round"/></svg>
<div style="position:absolute;left:541.5px;top:895.165px;width:22px;height:22px;border:1.3px solid #d4d4d4;border-radius:4.5px;background:#fff"></div>
<div class="t" style="left:599.70px;top:897.30px;font-size:16.5px;font-weight:400;font-style:normal;color:#363636;letter-spacing:0.948px;-webkit-text-stroke:0.25px currentColor">Cyberdyne</div>
<div style="position:absolute;left:737.7px;top:892.665px;width:58.0px;height:27.2px;background:#d8ede2;border-radius:14px"></div>
<div class="t" style="left:748.20px;top:897.17px;font-size:17px;font-weight:700;font-style:normal;color:#2c5843;letter-spacing:0.018px;">Plus</div>
<div class="t" style="left:869.70px;top:897.30px;font-size:16.5px;font-weight:400;font-style:normal;color:#363636;letter-spacing:1.323px;-webkit-text-stroke:0.25px currentColor">23</div>
<div class="t" style="left:924.40px;top:897.30px;font-size:16.5px;font-weight:400;font-style:normal;color:#363636;letter-spacing:0.969px;-webkit-text-stroke:0.25px currentColor">Jul 27, 2022 1:30 AM</div>
<div style="position:absolute;left:1206px;top:892.465px;width:83.4px;height:27.8px;background:#fef9f8;border-radius:14px"></div>
<div class="t" style="left:1217.60px;top:896.95px;font-size:17.5px;font-weight:700;font-style:normal;color:#923116;letter-spacing:1.186px;">-0.01</div>
<svg style="position:absolute;left:1265.4px;top:899.165px;" width="11" height="12.7" viewBox="0 0 11 12.7"><path d="M5.5 0.5V11.5M1 7L5.5 11.5L10 7" fill="none" stroke="#923116" stroke-width="2.1" stroke-linecap="round" stroke-linejoin="round"/></svg>
<div style="position:absolute;left:541.5px;top:960.7949999999998px;width:22px;height:22px;border:1.3px solid #d4d4d4;border-radius:4.5px;background:#fff"></div>
<div class="t" style="left:598.70px;top:962.93px;font-size:16.5px;font-weight:400;font-style:normal;color:#363636;letter-spacing:0.859px;-webkit-text-stroke:0.25px currentColor">Maya Adobe</div>
<div style="position:absolute;left:737.7px;top:958.2949999999998px;width:57.8px;height:27.2px;background:#f9ddd8;border-radius:14px"></div>
<div class="t" style="left:749.20px;top:962.80px;font-size:17px;font-weight:700;font-style:normal;color:#8d2d17;letter-spacing:0.015px;">Trial</div>
<div class="t" style="left:868.70px;top:962.93px;font-size:16.5px;font-weight:400;font-style:normal;color:#363636;letter-spacing:2.323px;-webkit-text-stroke:0.25px currentColor">12</div>
<div class="t" style="left:924.40px;top:962.93px;font-size:16.5px;font-weight:400;font-style:normal;color:#363636;letter-spacing:0.992px;-webkit-text-stroke:0.25px currentColor">Aug 28, 2022 1:30 AM</div>
<div style="position:absolute;left:1206px;top:958.0949999999999px;width:87.8px;height:27.8px;background:#f9fcfb;border-radius:14px"></div>
<div class="t" style="left:1217.60px;top:962.58px;font-size:17.5px;font-weight:700;font-style:normal;color:#2c8056;letter-spacing:0.688px;">+0.24</div>
<svg style="position:absolute;left:1268.8px;top:964.4949999999999px;" width="11" height="12.7" viewBox="0 0 11 12.7"><path d="M5.5 12.2V1.2M1 5.7L5.5 1.2L10 5.7" fill="none" stroke="#2c8056" stroke-width="2.1" stroke-linecap="round" stroke-linejoin="round"/></svg>
<div style="position:absolute;left:541.5px;top:1026.425px;width:22px;height:22px;border:1.3px solid #d4d4d4;border-radius:4.5px;background:#fff"></div>
<div class="t" style="left:599.70px;top:1016.36px;font-size:16.5px;font-weight:400;font-style:normal;color:#363636;letter-spacing:0.715px;-webkit-text-stroke:0.25px currentColor">The New</div>
<div class="t" style="left:599.70px;top:1041.46px;font-size:16.5px;font-weight:400;font-style:normal;color:#363636;letter-spacing:0.621px;-webkit-text-stroke:0.25px currentColor">York Inquirer</div>
<div style="position:absolute;left:737.7px;top:1023.925px;width:66.6px;height:27.2px;background:#fbe6da;border-radius:14px"></div>
<div class="t" style="left:748.20px;top:1028.43px;font-size:17px;font-weight:700;font-style:normal;color:#8f3514;letter-spacing:-0.202px;">Basic</div>
<div class="t" style="left:858.30px;top:1028.56px;font-size:16.5px;font-weight:400;font-style:normal;color:#363636;letter-spacing:1.773px;-webkit-text-stroke:0.25px currentColor">235</div>
<div class="t" style="left:924.40px;top:1028.56px;font-size:16.5px;font-weight:400;font-style:normal;color:#363636;letter-spacing:0.960px;-webkit-text-stroke:0.25px currentColor">Sep 20, 2022 1:30 AM</div>
<div style="position:absolute;left:1206px;top:1023.725px;width:87.8px;height:27.8px;background:#f9fcfb;border-radius:14px"></div>
<div class="t" style="left:1217.60px;top:1028.21px;font-size:17.5px;font-weight:700;font-style:normal;color:#2c8056;letter-spacing:0.688px;">+0.12</div>
<svg style="position:absolute;left:1268.8px;top:1030.125px;" width="11" height="12.7" viewBox="0 0 11 12.7"><path d="M5.5 12.2V1.2M1 5.7L5.5 1.2L10 5.7" fill="none" stroke="#2c8056" stroke-width="2.1" stroke-linecap="round" stroke-linejoin="round"/></svg>
<div style="position:absolute;left:541.5px;top:1092.055px;width:22px;height:22px;border:1.3px solid #d4d4d4;border-radius:4.5px;background:#fff"></div>
<div class="t" style="left:598.70px;top:1094.19px;font-size:16.5px;font-weight:400;font-style:normal;color:#363636;letter-spacing:0.729px;-webkit-text-stroke:0.25px currentColor">Flagships</div>
<div style="position:absolute;left:737.7px;top:1089.555px;width:72.7px;height:27.2px;background:#e4ddf5;border-radius:14px"></div>
<div class="t" style="left:748.20px;top:1094.06px;font-size:17px;font-weight:700;font-style:normal;color:#2c2676;letter-spacing:-0.014px;">Ente...</div>
<div class="t" style="left:869.70px;top:1094.19px;font-size:16.5px;font-weight:400;font-style:normal;color:#363636;letter-spacing:1.323px;-webkit-text-stroke:0.25px currentColor">35</div>
<div class="t" style="left:924.40px;top:1094.19px;font-size:16.5px;font-weight:400;font-style:normal;color:#363636;letter-spacing:1.033px;-webkit-text-stroke:0.25px currentColor">Oct 21, 2022 1:30 AM</div>
<div style="position:absolute;left:1206px;top:1089.355px;width:83.4px;height:27.8px;background:#fef9f8;border-radius:14px"></div>
<div class="t" style="left:1217.60px;top:1093.84px;font-size:17.5px;font-weight:700;font-style:normal;color:#923116;letter-spacing:1.186px;">-0.04</div>
<svg style="position:absolute;left:1265.4px;top:1096.055px;" width="11" height="12.7" viewBox="0 0 11 12.7"><path d="M5.5 0.5V11.5M1 7L5.5 11.5L10 7" fill="none" stroke="#923116" stroke-width="2.1" stroke-linecap="round" stroke-linejoin="round"/></svg>
<div style="position:absolute;left:1349.5px;top:353.2px;width:80px;height:43.8px;background:#fff;border:1.3px solid #d6d6d6;border-radius:6px"></div>
<svg style="position:absolute;left:1362px;top:366px;" width="20" height="19.5" viewBox="0 0 20 19.5"><path d="M0.3 5.2A2.7 2.7 0 0 1 3 2.5H17A2.7 2.7 0 0 1 19.7 5.2V16.3A2.7 2.7 0 0 1 17 19H3A2.7 2.7 0 0 1 0.3 16.3Z" fill="#a9a9a9"/><path d="M5.5 0.6V4.5M14.5 0.6V4.5" stroke="#a9a9a9" stroke-width="2.2" stroke-linecap="round"/><path d="M0.3 7.4H19.7" stroke="#fff" stroke-width="1.2"/><path d="M6 13.3H14" stroke="#fff" stroke-width="2"/></svg>
<div class="t" style="left:1391.40px;top:367.03px;font-size:16.5px;font-weight:400;font-style:normal;color:#9a9a9a;letter-spacing:0.000px;-webkit-text-stroke:0.25px currentColor">S</div>
<div style="position:absolute;left:1349.5px;top:409px;width:80px;height:740px;background:#fff;border:1.3px solid #d6d6d6;border-radius:6px"></div>
<div style="position:absolute;left:1350px;top:466.2px;width:60px;height:1.4px;background:#dcdcdc"></div>
<div style="position:absolute;left:1378.7px;top:487.3px;width:40px;height:55.3px;background:#e9eaf6;border-radius:6px"></div>
<div style="position:absolute;left:1397px;top:505.8px;width:6px;height:18px;background:#2a3a7c"></div>
<div style="position:absolute;left:1378.7px;top:565px;width:30px;height:1.3px;background:#dcdcdc"></div>
</body></html>
